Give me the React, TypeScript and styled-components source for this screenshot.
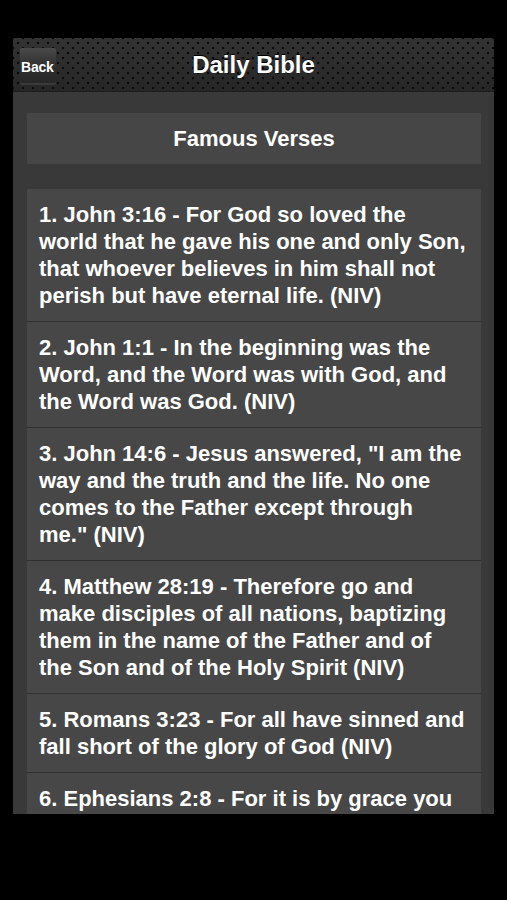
import styled, { createGlobalStyle } from 'styled-components';

const GlobalStyle = createGlobalStyle`
  html, body {
    margin: 0;
    padding: 0;
    background: #000;
  }
  body {
    font-family: "Liberation Sans", Arial, sans-serif;
  }
`;

const Page = styled.div`
  width: 507px;
  height: 900px;
  padding: 38px 13px 0 13px;
  box-sizing: border-box;
  background: #000;
`;

const Screen = styled.div`
  width: 481px;
  height: 776px;
  display: flex;
  flex-direction: column;
  overflow: hidden;
  background: #393939;
`;

const NavBar = styled.div`
  position: relative;
  flex: 0 0 53px;
  display: flex;
  align-items: center;
  justify-content: center;
  background-color: #2b2b2b;
  background-image:
    radial-gradient(circle, #0a0a0a 1.3px, transparent 1.6px),
    radial-gradient(circle, #0a0a0a 1.3px, transparent 1.6px),
    linear-gradient(#333, #262626);
  background-size: 10px 10px, 10px 10px, 100% 100%;
  background-position: 0 0, 5px 5px, 0 0;
  border-bottom: 1px solid #1c1c1c;
`;

const BackButton = styled.button`
  position: absolute;
  left: 7px;
  top: 10px;
  width: 36px;
  height: 37px;
  padding: 0 0 0 1px;
  border: none;
  border-radius: 2px;
  background: linear-gradient(#4a4a4a, #2e2e2e 50%, #262626);
  box-shadow: inset 0 -2px 0 #3a3a3a;
  color: #fff;
  font-family: "Liberation Sans", Arial, sans-serif;
  font-size: 14px;
  font-weight: bold;
  text-align: left;
  letter-spacing: -0.2px;
`;

const Title = styled.h1`
  margin: 0;
  color: #fff;
  font-size: 24px;
  font-weight: bold;
  text-shadow: 0 -1px 0 #000;
`;

const Content = styled.div`
  flex: 1;
  padding: 21px 13px 0 14px;
  display: flex;
  flex-direction: column;
`;

const HeaderCard = styled.div`
  height: 51px;
  display: flex;
  align-items: center;
  justify-content: center;
  background: #464646;
  color: #fff;
  font-size: 22px;
  font-weight: bold;
`;

const VerseList = styled.ul`
  list-style: none;
  margin: 25px 0 0;
  padding: 0;
  display: flex;
  flex-direction: column;
  gap: 1px;
  background: #303030;
`;

const VerseItem = styled.li`
  padding: 12px 15px 12px 12px;
  background: #474747;
  color: #fff;
  font-size: 22px;
  font-weight: bold;
  line-height: 27px;
`;

const verses = [
  '1. John 3:16 - For God so loved the world that he gave his one and only Son, that whoever believes in him shall not perish but have eternal life. (NIV)',
  '2. John 1:1 - In the beginning was the Word, and the Word was with God, and the Word was God. (NIV)',
  '3. John 14:6 - Jesus answered, "I am the way and the truth and the life. No one comes to the Father except through me." (NIV)',
  '4. Matthew 28:19 - Therefore go and make disciples of all nations, baptizing them in the name of the Father and of the Son and of the Holy Spirit (NIV)',
  '5. Romans 3:23 - For all have sinned and fall short of the glory of God (NIV)',
  '6. Ephesians 2:8 - For it is by grace you have been saved, through faith\u2014and this is not from yourselves, it is the gift of God (NIV)',
];

const App = () => {
  return (
    <>
      <GlobalStyle />
      <Page>
        <Screen>
          <NavBar>
            <BackButton>Back</BackButton>
            <Title>Daily Bible</Title>
          </NavBar>
          <Content>
            <HeaderCard>Famous Verses</HeaderCard>
            <VerseList>
              {verses.map((v) => (
                <VerseItem key={v}>{v}</VerseItem>
              ))}
            </VerseList>
          </Content>
        </Screen>
      </Page>
    </>
  );
};

export default App;
